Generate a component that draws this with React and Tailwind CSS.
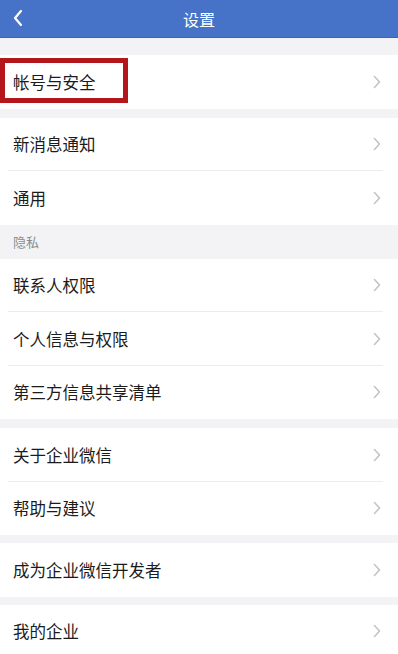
import React from 'react';

const font = { fontFamily: '"Noto Sans CJK SC", "Noto Sans", sans-serif' };

function Chevron() {
  return (
    <svg width="8" height="14" viewBox="0 0 8 14" className="mr-[17px] shrink-0">
      <path d="M1.5 1.5 L6.5 7 L1.5 12.5" fill="none" stroke="#c4c4c6" strokeWidth="1.6" strokeLinecap="round" strokeLinejoin="round" />
    </svg>
  );
}

function Row({ label, divider, highlight, h = 'h-[53.5px]' }) {
  return (
    <div className={`relative bg-white ${h} flex items-center justify-between`}>
      <span className="pl-[13px] text-[16.5px] text-[#1b1b1b] leading-none">{label}</span>
      <Chevron />
      {divider && <div className="absolute bottom-0 left-2 right-[15px] h-px bg-[#ececee]" />}
      {highlight && (
        <div className="absolute left-0 top-[3px] w-[128px] h-[45px] border-[5px] border-[#b3161b]" />
      )}
    </div>
  );
}

export default function App() {
  return (
    <div className="w-[398px] h-[654px] overflow-hidden bg-[#f3f3f5]" style={font}>
      {/* Header */}
      <div className="relative h-[38px] bg-[#4673c7] border-b border-[#3c64b0] flex items-center justify-center">
        <svg width="12" height="18" viewBox="0 0 12 18" className="absolute left-[12px] top-[9px]">
          <path d="M9 2 L3 9 L9 16" fill="none" stroke="#ffffff" strokeWidth="2.2" strokeLinecap="round" strokeLinejoin="round" />
        </svg>
        <span className="text-white text-[16px] leading-none">设置</span>
      </div>

      <div className="h-[17px]" />
      <Row label="帐号与安全" highlight />

      <div className="h-[9px]" />
      <Row label="新消息通知" divider />
      <Row label="通用" />

      <div className="h-[34px] flex items-center pl-[13px] text-[13px] text-[#8d8d8f]">隐私</div>
      <Row label="联系人权限" divider />
      <Row label="个人信息与权限" divider />
      <Row label="第三方信息共享清单" />

      <div className="h-[9px]" />
      <Row label="关于企业微信" divider />
      <Row label="帮助与建议" />

      <div className="h-[8px]" />
      <Row label="成为企业微信开发者" />

      <div className="h-[8px]" />
      <Row label="我的企业" />
    </div>
  );
}
